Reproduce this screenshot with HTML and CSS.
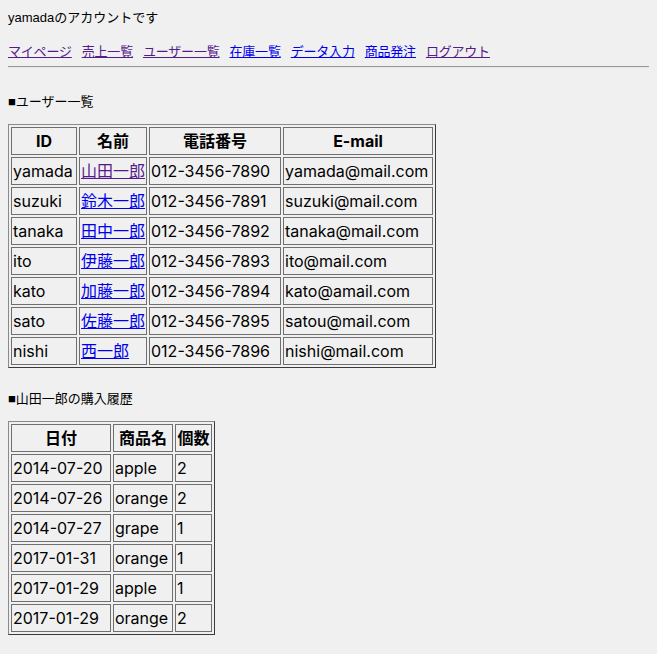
FILE: index.html
```html
<!DOCTYPE html>
<html lang="ja">
<head>
<meta charset="utf-8">
<title>ユーザー一覧</title>
<link rel="stylesheet" href="styles.css">
</head>
<body>
<div class="greeting">yamadaのアカウントです</div>
<nav class="nav">
  <a class="visited" href="#">マイページ</a>
  <a class="visited" href="#">売上一覧</a>
  <a class="visited" href="#">ユーザー一覧</a>
  <a href="#">在庫一覧</a>
  <a href="#">データ入力</a>
  <a href="#">商品発注</a>
  <a class="visited" href="#">ログアウト</a>
</nav>
<hr class="rule">
<p class="section-title">■ユーザー一覧</p>
<table class="grid">
  <tr><th class="c-id">ID</th><th class="c-name">名前</th><th class="c-tel">電話番号</th><th class="c-mail">E-mail</th></tr>
  <tr><td>yamada</td><td><a class="visited" href="#">山田一郎</a></td><td class="num">012-3456-7890</td><td>yamada@mail.com</td></tr>
  <tr><td>suzuki</td><td><a href="#">鈴木一郎</a></td><td class="num">012-3456-7891</td><td>suzuki@mail.com</td></tr>
  <tr><td>tanaka</td><td><a href="#">田中一郎</a></td><td class="num">012-3456-7892</td><td>tanaka@mail.com</td></tr>
  <tr><td>ito</td><td><a href="#">伊藤一郎</a></td><td class="num">012-3456-7893</td><td>ito@mail.com</td></tr>
  <tr><td>kato</td><td><a href="#">加藤一郎</a></td><td class="num">012-3456-7894</td><td>kato@amail.com</td></tr>
  <tr><td>sato</td><td><a href="#">佐藤一郎</a></td><td class="num">012-3456-7895</td><td>satou@mail.com</td></tr>
  <tr><td>nishi</td><td><a href="#">西一郎</a></td><td class="num">012-3456-7896</td><td>nishi@mail.com</td></tr>
</table>
<p class="section-title">■山田一郎の購入履歴</p>
<table class="grid">
  <tr><th class="c-date">日付</th><th class="c-item">商品名</th><th class="c-qty">個数</th></tr>
  <tr><td class="num">2014-07-20</td><td>apple</td><td class="num">2</td></tr>
  <tr><td class="num">2014-07-26</td><td>orange</td><td class="num">2</td></tr>
  <tr><td class="num">2014-07-27</td><td>grape</td><td class="num">1</td></tr>
  <tr><td class="num">2017-01-31</td><td>orange</td><td class="num">1</td></tr>
  <tr><td class="num">2017-01-29</td><td>apple</td><td class="num">1</td></tr>
  <tr><td class="num">2017-01-29</td><td>orange</td><td class="num">2</td></tr>
</table>
</body>
</html>
```

FILE: styles.css
```css
html, body {
  background: #f0f0f0;
}
body {
  margin: 8px;
  color: #000;
  font-family: "Liberation Sans", "Noto Sans CJK JP", sans-serif;
  font-size: 13px;
  line-height: 20px;
}
a {
  color: #0000ee;
  text-decoration: underline;
}
a.visited {
  color: #551a8b;
}
.greeting {
  margin: 0;
}
.nav {
  display: flex;
  gap: 10px;
  margin-top: 14px;
  letter-spacing: -0.2px;
}
.rule {
  height: 0;
  margin: 4px -8px 0 -1px;
  border: 0;
  border-top: 1px solid #9a9a9a;
  border-bottom: 1px solid #e6e6e6;
}
.section-title {
  margin: 24px 0 12px;
}
.grid + .section-title {
  margin-top: 21px;
}
.grid {
  border-collapse: separate;
  border-spacing: 2px;
  border: 1px solid;
  border-color: #8a8a8a #3a3a3a #3a3a3a #8a8a8a;
  font-family: "Inter", "Noto Sans CJK JP", sans-serif;
  font-size: 16px;
  line-height: 24px;
}
.grid th,
.grid td {
  border: 1px solid #6f6f6f;
  padding: 1px;
  white-space: nowrap;
}
.grid th {
  font-weight: bold;
  text-align: center;
}
.grid td {
  text-align: left;
}
.c-id { width: 62px; }
.c-name { width: 64px; }
.c-tel { width: 128px; }
.c-mail { width: 146px; }
.c-date { width: 96px; }
.c-item { width: 56px; }
.c-qty { width: 33px; }
```
